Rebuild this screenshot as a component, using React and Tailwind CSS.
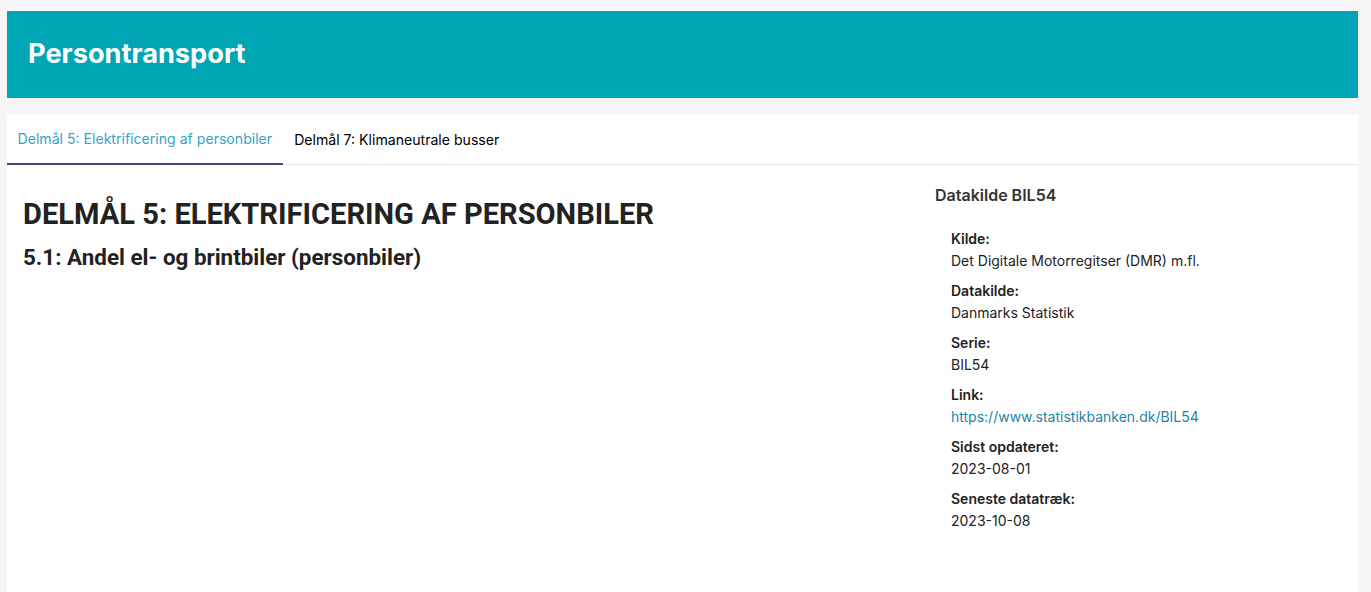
const items = [
  { label: "Kilde:", value: "Det Digitale Motorregitser (DMR) m.fl." },
  { label: "Datakilde:", value: "Danmarks Statistik" },
  { label: "Serie:", value: "BIL54" },
  { label: "Link:", value: "https://www.statistikbanken.dk/BIL54", href: true },
  { label: "Sidst opdateret:", value: "2023-08-01" },
  { label: "Seneste datatræk:", value: "2023-10-08" },
];

function App() {
  return (
    <div className="min-h-screen bg-[#f6f6f6] pl-[7px] pr-[13px] pt-[11px] font-['Inter',sans-serif] text-[#222]">
      <header className="flex h-[87px] items-center bg-[#00a6b6] pl-[21px]">
        <h1 className="text-[27.2px] font-bold text-white">Persontransport</h1>
      </header>

      <div className="mt-[17px] min-h-[477px] bg-white">
        <nav className="flex h-[50px] border-b border-[#e6e6e6] text-[14.1px]">
          <button className="h-[50px] border-b-2 border-[#3d4777] px-[10.5px] text-[#35a4c9]">
            Delmål 5: Elektrificering af personbiler
          </button>
          <button className="h-[50px] px-[11.5px] text-black">
            Delmål 7: Klimaneutrale busser
          </button>
        </nav>

        <div className="flex">
          <div className="flex-1 pl-4 pt-[29px] font-['Roboto',sans-serif]">
            <h2 className="text-[29.1px] font-bold leading-[40px] text-[#222]">
              DELMÅL 5: ELEKTRIFICERING AF PERSONBILER
            </h2>
            <h3 className="mt-[9px] text-[22.4px] font-bold leading-[28px] text-[#222]">
              5.1: Andel el- og brintbiler (personbiler)
            </h3>
          </div>

          <aside className="w-[423px] pt-[20px]">
            <h4 className="text-[16px] font-semibold leading-[20px] text-[#333]">
              Datakilde BIL54
            </h4>
            <dl className="mt-[23px] pl-4 text-[14px]">
              {items.map((it) => (
                <div key={it.label} className="mb-[8px]">
                  <dt className="font-semibold leading-[22px] text-[#222]">{it.label}</dt>
                  <dd className="leading-[22px]">
                    {it.href ? (
                      <a href="#" className="text-[#1a86a8]">
                        {it.value}
                      </a>
                    ) : (
                      it.value
                    )}
                  </dd>
                </div>
              ))}
            </dl>
          </aside>
        </div>
      </div>
    </div>
  );
}

export default App;
